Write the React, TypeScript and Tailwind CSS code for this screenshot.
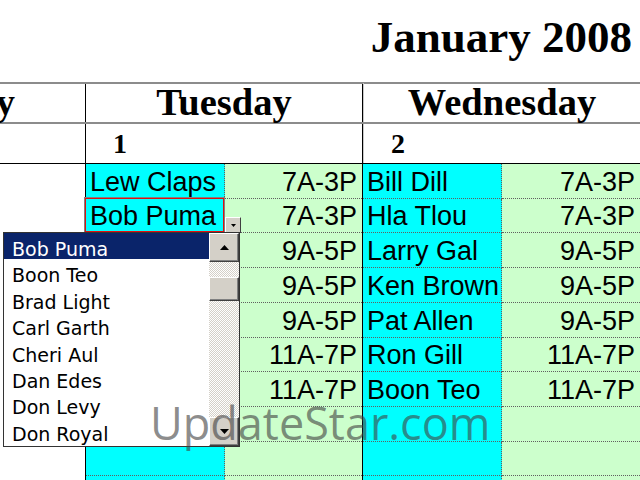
import React from 'react'

const tuesday = [
  ['Lew Claps', '7A-3P'],
  ['Bob Puma', '7A-3P'],
  ['Ann Lee', '9A-5P'],
  ['Tim Hall', '9A-5P'],
  ['Sue Park', '9A-5P'],
  ['Jim Wong', '11A-7P'],
  ['Lee Tan', '11A-7P'],
  ['', ''],
  ['', ''],
  ['', ''],
]

const wednesday = [
  ['Bill Dill', '7A-3P'],
  ['Hla Tlou', '7A-3P'],
  ['Larry Gal', '9A-5P'],
  ['Ken Brown', '9A-5P'],
  ['Pat Allen', '9A-5P'],
  ['Ron Gill', '11A-7P'],
  ['Boon Teo', '11A-7P'],
  ['', ''],
  ['', ''],
  ['', ''],
]

const rowHeights = [
  'h-[35px]',
  'h-[34px]',
  'h-[35px]',
  'h-[35px]',
  'h-[35px]',
  'h-[34px]',
  'h-[35px]',
  'h-[35px]',
  'h-[34px]',
  'h-[35px]',
]

const people = ['Bob Puma', 'Boon Teo', 'Brad Light', 'Carl Garth', 'Cheri Aul', 'Dan Edes', 'Don Levy', 'Don Royal']

function Arrow({ down }: { down?: boolean }) {
  return (
    <svg width="9" height="5" viewBox="0 0 9 5">
      {down ? <polygon points="0,0 9,0 4.5,5" fill="#000" /> : <polygon points="0,5 9,5 4.5,0" fill="#000" />}
    </svg>
  )
}

function NameCell({ text }: { text: string }) {
  return (
    <div className="w-[139px] h-full flex items-end pb-[2px] pl-[4px] bg-[#00ffff] border-r border-b border-dotted border-[#606060] overflow-visible whitespace-nowrap leading-none">
      {text}
    </div>
  )
}

function TimeCell({ text, grow }: { text: string; grow?: boolean }) {
  return (
    <div
      className={
        grow
          ? 'flex-1 h-full flex items-end justify-end pb-[2px] pr-[5px] bg-[#ccffcc] border-b border-dotted border-[#606060] leading-none'
          : 'w-[137px] h-full flex items-end justify-end pb-[2px] pr-[5px] bg-[#ccffcc] border-b border-dotted border-[#606060] leading-none'
      }
    >
      {text}
    </div>
  )
}

export default function App() {
  return (
    <div className="relative w-[640px] h-[480px] overflow-hidden bg-white">
      {/* Title */}
      <div className="h-[82px] flex justify-end pr-[8px] pt-[15px]">
        <h1 className="font-['Liberation_Serif',serif] font-bold text-[45px] leading-none text-black">January 2008</h1>
      </div>

      <div className="ml-[-192px] w-[832px]">
        {/* Day names */}
        <div className="flex h-[40px] border-t-2 border-[#8c8c8c] font-['Liberation_Serif',serif] font-bold text-[38.5px] leading-none">
          <div className="w-[277px] text-center -mt-px">Monday</div>
          <div className="w-px bg-black" />
          <div className="w-[276px] text-center -mt-px">Tuesday</div>
          <div className="w-px bg-black" />
          <div className="flex-1 text-center -mt-px border-l border-[#c8c8c8]">Wednesday</div>
        </div>

        {/* Dates */}
        <div className="flex h-[41px] border-t-2 border-[#8c8c8c] font-['Liberation_Serif',serif] font-bold text-[28px] leading-none">
          <div className="w-[277px]" />
          <div className="w-px bg-black" />
          <div className="w-[276px] pl-[27px] pt-[6px]">1</div>
          <div className="w-px bg-black" />
          <div className="flex-1 pl-[27px] pt-[6px] border-l border-[#c8c8c8]">2</div>
        </div>

        {/* Shifts */}
        <div className="border-t border-black font-['Liberation_Sans',Arial,sans-serif] text-[27px] text-black">
          {rowHeights.map((h, i) => (
            <div key={i} className={`flex ${h}`}>
              <div className="w-[277px] h-full bg-white" />
              <div className="w-px h-full bg-black" />
              <NameCell text={tuesday[i][0]} />
              <TimeCell text={tuesday[i][1]} />
              <div className="w-px h-full bg-black" />
              <NameCell text={wednesday[i][0]} />
              <TimeCell text={wednesday[i][1]} grow />
            </div>
          ))}
        </div>
      </div>

      {/* Active cell outline */}
      <div className="absolute left-[84px] top-[197px] w-[141px] h-[36px] border border-[#808080] shadow-[inset_0_0_0_1px_#e01010]" />

      {/* Cell dropdown button */}
      <div className="absolute left-[225px] top-[217px] w-[16px] h-[16px] flex items-center justify-center bg-[#d4d0c8] border border-t-white border-l-white border-r-[#404040] border-b-[#404040]">
        <svg width="5" height="3" viewBox="0 0 5 3">
          <polygon points="0,0 5,0 2.5,3" fill="#000" />
        </svg>
      </div>

      {/* Dropdown list */}
      <div className="absolute left-[3px] top-[232px] w-[237px] h-[215px] flex bg-white border border-[#333] font-['DejaVu_Sans',sans-serif] text-[19px] text-black">
        <div className="flex-1 overflow-hidden">
          {people.map((p, i) => (
            <div
              key={p}
              className={
                i === 0
                  ? 'h-[26.4px] leading-[32.8px] pl-[8px] whitespace-nowrap bg-[#0a246a] text-white'
                  : 'h-[26.4px] leading-[32.8px] pl-[8px] whitespace-nowrap'
              }
            >
              {p}
            </div>
          ))}
        </div>
        <div className="w-[30px] flex flex-col">
          <div className="h-[29px] flex items-center justify-center bg-[#d4d0c8] border border-t-white border-l-white border-r-[#404040] border-b-[#404040] shadow-[inset_-1px_-1px_0_#808080]">
            <Arrow />
          </div>
          <div className="h-[15px] bg-[image:repeating-conic-gradient(#d4d0c8_0_25%,#ffffff_0_50%)] bg-[length:2px_2px]" />
          <div className="h-[24px] bg-[#d4d0c8] border border-t-white border-l-white border-r-[#404040] border-b-[#404040] shadow-[inset_-1px_-1px_0_#808080]" />
          <div className="flex-1 bg-[image:repeating-conic-gradient(#d4d0c8_0_25%,#ffffff_0_50%)] bg-[length:2px_2px]" />
          <div className="h-[29px] flex items-center justify-center bg-[#d4d0c8] border border-t-white border-l-white border-r-[#404040] border-b-[#404040] shadow-[inset_-1px_-1px_0_#808080]">
            <Arrow down />
          </div>
        </div>
      </div>

      {/* Watermark */}
      <div className="absolute left-[150px] top-[400px] font-['Open_Sans',sans-serif] text-[45px] leading-none text-[rgba(64,64,64,0.6)] whitespace-nowrap pointer-events-none">
        UpdateStar.com
      </div>
    </div>
  )
}
